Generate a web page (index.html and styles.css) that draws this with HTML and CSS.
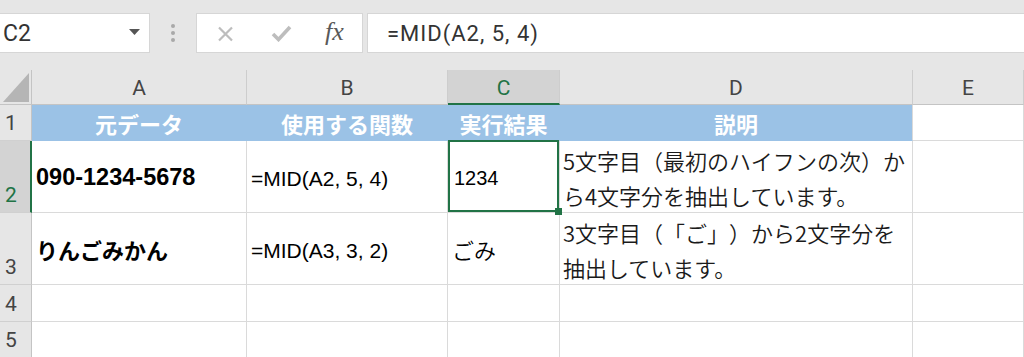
FILE: index.html
```html
<!DOCTYPE html>
<html lang="ja">
<head>
<meta charset="utf-8">
<title>MID</title>
<link rel="stylesheet" href="styles.css">
</head>
<body>
<div class="app">
  <div class="toolbar">
    <div class="namebox">
      <span class="name">C2</span>
      <svg class="caret" width="11" height="6" viewBox="0 0 11 6"><polygon points="0,0 11,0 5.5,6" fill="#555"/></svg>
    </div>
    <div class="grip"><i></i><i></i><i></i></div>
    <div class="fxbox">
      <svg class="ico-x" width="17" height="16" viewBox="0 0 17 16"><path d="M2 1.5 L15 14.5 M15 1.5 L2 14.5" stroke="#bdbdbd" stroke-width="2.2" fill="none"/></svg>
      <svg class="ico-check" width="21" height="17" viewBox="0 0 21 17"><path d="M2 9 L7.5 14.5 L19 2" stroke="#bdbdbd" stroke-width="3.6" fill="none"/></svg>
      <span class="fx">fx</span>
    </div>
    <div class="formula">=MID(A2, 5, 4)</div>
  </div>

  <div class="sheet">
    <div class="corner"><svg width="31" height="34" viewBox="0 0 31 34"><polygon points="3,32 29,32 29,3" fill="#b5b5b5"/></svg></div>
    <div class="ch">A</div>
    <div class="ch">B</div>
    <div class="ch ch-sel">C</div>
    <div class="ch">D</div>
    <div class="ch">E</div>

    <div class="rh">1</div>
    <div class="c hd">元データ</div>
    <div class="c hd">使用する関数</div>
    <div class="c hd">実行結果</div>
    <div class="c hd hd-last">説明</div>
    <div class="c"></div>

    <div class="rh rh-sel">2</div>
    <div class="c bold num">090-1234-5678</div>
    <div class="c lat">=MID(A2, 5, 4)</div>
    <div class="c lat small sel">1234<span class="handle"></span></div>
    <div class="c wrap"><span>5文字目（最初のハイフンの次）か</span><span>ら4文字分を抽出しています。</span></div>
    <div class="c"></div>

    <div class="rh">3</div>
    <div class="c bold">りんごみかん</div>
    <div class="c lat">=MID(A3, 3, 2)</div>
    <div class="c">ごみ</div>
    <div class="c wrap"><span>3文字目（「ご」）から2文字分を</span><span>抽出しています。</span></div>
    <div class="c"></div>

    <div class="rh">4</div>
    <div class="c"></div><div class="c"></div><div class="c"></div><div class="c"></div><div class="c"></div>

    <div class="rh">5</div>
    <div class="c"></div><div class="c"></div><div class="c"></div><div class="c"></div><div class="c"></div>
  </div>
</div>
</body>
</html>
```

FILE: styles.css
```css
* { box-sizing: border-box; }
html, body { margin: 0; padding: 0; }
body {
  width: 1024px;
  height: 357px;
  overflow: hidden;
  background: #e6e6e6;
  font-family: "Noto Sans CJK JP", "Liberation Sans", sans-serif;
  color: #000;
  text-spacing-trim: space-all;
}
.app { width: 1024px; }

/* toolbar */
.toolbar {
  height: 70px;
  padding-top: 13px;
  display: flex;
  align-items: flex-start;
}
.namebox {
  width: 151px;
  height: 40px;
  margin-left: -1px;
  background: #fff;
  border: 1px solid #d6d6d6;
  display: flex;
  align-items: center;
  justify-content: space-between;
  padding: 0 9px 0 3px;
}
.name {
  font-family: Roboto, "Liberation Sans", sans-serif;
  font-size: 23px;
  color: #333;
  line-height: 1;
}
.caret { margin-top: -2px; }
.grip {
  width: 46px;
  height: 40px;
  display: flex;
  flex-direction: column;
  align-items: center;
  justify-content: center;
  gap: 3px;
}
.grip i {
  display: block;
  width: 4px;
  height: 4px;
  border-radius: 50%;
  background: #a9a9a9;
}
.fxbox {
  width: 167px;
  height: 40px;
  background: #fff;
  border: 1px solid #d6d6d6;
  display: flex;
  align-items: center;
  padding-left: 20px;
}
.ico-x { margin-top: 1px; }
.ico-check { margin-left: 37px; }
.fx {
  margin-left: 33px;
  font-family: "Liberation Serif", serif;
  font-style: italic;
  font-size: 26px;
  color: #595959;
  line-height: 1;
  margin-top: -2px;
}
.formula {
  flex: 1;
  height: 40px;
  margin-left: 4px;
  background: #fff;
  border: 1px solid #d6d6d6;
  border-right: none;
  display: flex;
  align-items: center;
  padding-left: 19px;
  font-family: Roboto, "Liberation Sans", sans-serif;
  font-size: 22px;
  letter-spacing: 1px;
  color: #333;
}

/* sheet */
.sheet {
  display: grid;
  grid-template-columns: 32px 215px 201px 112px 353px 111px;
  grid-template-rows: 35px 36px 72px 72px 37px 36px;
  background: #fff;
}
.corner {
  background: #e6e6e6;
  border-right: 1px solid #c4c4c4;
  border-bottom: 1px solid #c4c4c4;
}
.corner svg { display: block; }
.ch {
  background: #e6e6e6;
  border-right: 1px solid #cdcdcd;
  border-bottom: 1px solid #c4c4c4;
  display: flex;
  align-items: center;
  justify-content: center;
  font-family: Roboto, "Liberation Sans", sans-serif;
  font-size: 21px;
  color: #444;
  padding-top: 2px;
}
.ch-sel {
  background: #d3d3d3;
  color: #217346;
  border-bottom: 2px solid #217346;
}
.rh {
  background: #e6e6e6;
  border-right: 1px solid #c4c4c4;
  border-bottom: 1px solid #d0d0d0;
  display: flex;
  align-items: flex-end;
  padding: 0 0 7px 5px;
  font-family: Roboto, "Liberation Sans", sans-serif;
  font-size: 21px;
  line-height: 20px;
  color: #444;
}
.rh-sel {
  background: #d3d3d3;
  color: #217346;
  border-right: 2px solid #217346;
}
.c {
  border-right: 1px solid #dadada;
  border-bottom: 1px solid #dadada;
  display: flex;
  align-items: center;
  padding-left: 4px;
  font-size: 22px;
  font-weight: 350;
  white-space: nowrap;
}
.hd {
  background: #9bc2e6;
  border-right-color: #9bc2e6;
  border-bottom-color: #9bc2e6;
  justify-content: center;
  padding-left: 0;
  color: #fff;
  font-weight: 700;
}
.hd-last { border-right-color: #dadada; }
.bold { font-weight: 700; }
.num {
  font-family: "Liberation Sans", sans-serif;
  font-size: 23.5px;
  padding-top: 2px;
}
.lat {
  font-family: "Liberation Sans", sans-serif;
  font-weight: 400;
  font-size: 21px;
  padding-top: 4px;
}
.small { font-size: 20px; padding-left: 6px; }
.wrap {
  flex-direction: column;
  align-items: flex-start;
  justify-content: center;
  line-height: 35px;
  padding-left: 3px;
  padding-top: 2px;
  color: #1a1a1a;
}
.sel { position: relative; }
.sel::after {
  content: "";
  position: absolute;
  top: -1px;
  left: 0;
  right: 0;
  bottom: 0;
  border: 2px solid #217346;
  pointer-events: none;
}
.handle {
  position: absolute;
  right: -3px;
  bottom: -3px;
  width: 7px;
  height: 7px;
  background: #217346;
  z-index: 2;
}
```
